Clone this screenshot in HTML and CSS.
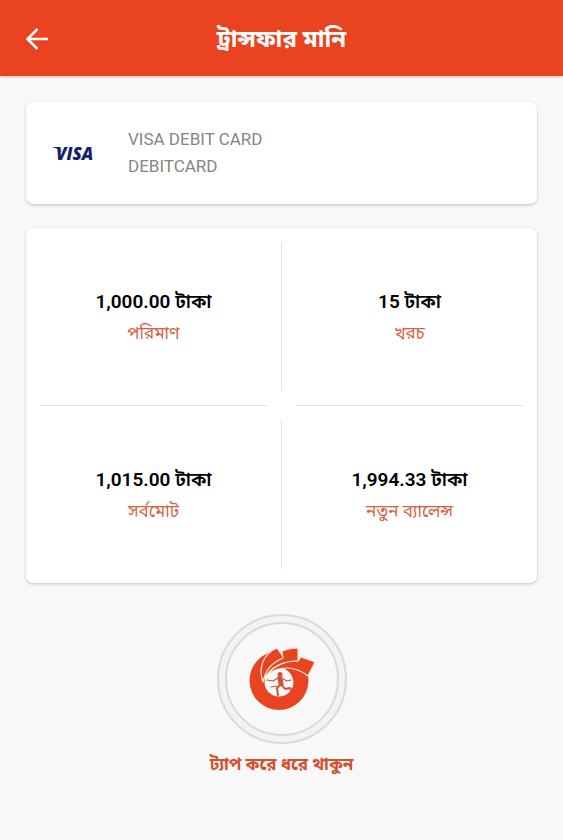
FILE: index.html
```html
<!DOCTYPE html>
<html lang="bn">
<head>
    <meta charset="UTF-8">
    <meta name="viewport" content="width=device-width, initial-scale=1.0">
    <title>ট্রান্সফার মানি</title>
    <link rel="stylesheet" href="styles.css">
</head>
<body>
    <header class="topbar">
        <button class="back" type="button" aria-label="Back">
            <svg width="24" height="24" viewBox="0 0 24 24" fill="none" stroke="#fff" stroke-width="2.5">
                <path d="M24 12H4M13.500 2L3.500 12l10 10"/>
            </svg>
        </button>
        <h1>ট্রান্সফার মানি</h1>
    </header>

    <main>
        <section class="card account">
            <svg class="visa" width="44" height="26" viewBox="0 0 44 26" role="img" aria-label="VISA">
                <path d="M1 7H7l3 5Q7 8.500 1 7.500z" fill="#14206b"/>
                <text x="4" y="20">VISA</text>
            </svg>
            <div class="account-text">
                <div>VISA DEBIT CARD</div>
                <div>DEBITCARD</div>
            </div>
        </section>

        <section class="card summary">
            <div class="cell">
                <div class="value">1,000.00 টাকা</div>
                <div class="label">পরিমাণ</div>
            </div>
            <div class="line-v"></div>
            <div class="cell">
                <div class="value">15 টাকা</div>
                <div class="label">খরচ</div>
            </div>
            <div class="line-h"></div>
            <div></div>
            <div class="line-h"></div>
            <div class="cell">
                <div class="value">1,015.00 টাকা</div>
                <div class="label">সর্বমোট</div>
            </div>
            <div class="line-v"></div>
            <div class="cell">
                <div class="value">1,994.33 টাকা</div>
                <div class="label">নতুন ব্যালেন্স</div>
            </div>
        </section>

        <button class="tap" type="button">
            <span class="ring">
                <span class="ring-inner">
                    <svg width="66" height="66" viewBox="0 0 66 66">
                        <circle cx="30" cy="34.500" r="29.500" fill="#e8441f"/>
                        <path d="M22 0H66V31L58 30Q46 22 31 22L16 28Z" fill="#f8f8f8"/>
                        <circle cx="30" cy="36" r="14.500" fill="#f8f8f8"/>
                        <path d="M34 22Q46 20 55 26L59 34L46 42Q44 25 34 22z" fill="#e8441f"/>
                        <g fill="#e8441f" stroke="#fbe3db" stroke-width="1.200" stroke-linejoin="round">
                            <path d="M14 36C9 22 14 8 28 2l7 10C25 16 17 24 14 36z"/>
                            <path d="M15 33C17 22 25 16 34 12l-1-7Q41 2 49 2v13C35 15 22 20 15 33z"/>
                            <path d="M18 29C26 19 37 15 49 15l3-4 14 5-7 14C47 20 30 19 18 29z"/>
                        </g>
                        <g fill="none" stroke="#cf5430" stroke-linecap="round" stroke-linejoin="round">
                            <circle cx="31" cy="28.500" r="2.500" fill="#cf5430" stroke="none"/>
                            <path d="M31 32l1 6" stroke-width="5"/>
                            <path d="M31 39l-3 3 1 7M33 39l3 4 5-1 1 2" stroke-width="2"/>
                            <path d="M29 32l-5 3-6-1M34 33l4 2 4-1" stroke-width="1.200"/>
                            <path d="M22 41l6-1" stroke-width="1"/>
                        </g>
                    </svg>
                </span>
            </span>
            <span class="tap-label">ট্যাপ করে ধরে থাকুন</span>
        </button>
    </main>
</body>
</html>
```
FILE: styles.css
```css
* {
    box-sizing: border-box;
}
body {
    margin: 0;
    background: #f8f8f8;
    font-family: Roboto, "Noto Sans Bengali", "Noto Sans", sans-serif;
    color: #000;
}
button {
    border: none;
    background: none;
    padding: 0;
    font-family: inherit;
    cursor: pointer;
}
.topbar {
    display: grid;
    grid-template-columns: 26px 1fr 26px;
    align-items: center;
    height: 76px;
    padding: 2px 24px 0;
    background: #e9441f;
    box-shadow: 0 1px 3px rgba(0, 0, 0, 0.2);
}
.back {
    display: flex;
}
.topbar h1 {
    margin: 0;
    font-size: 24px;
    line-height: 32px;
    font-weight: 700;
    text-align: center;
    color: #fff;
}
main {
    padding: 26px;
}
.card {
    background: #fff;
    border-radius: 7px;
    box-shadow: 0 1px 3px rgba(0, 0, 0, 0.24);
}
.account {
    display: flex;
    align-items: center;
    gap: 32px;
    padding: 24px 26px;
    margin-bottom: 24px;
}
.visa text {
    font-family: "Open Sans", "Noto Sans", sans-serif;
    font-size: 17px;
    font-weight: 800;
    font-style: italic;
    fill: #14206b;
}
.account-text {
    font-size: 17px;
    line-height: 27px;
    color: #858585;
}
.summary {
    display: grid;
    grid-template-columns: 1fr 1px 1fr;
    grid-template-rows: 177px 1px 177px;
}
.cell {
    display: flex;
    flex-direction: column;
    justify-content: center;
    text-align: center;
}
.value {
    font-size: 19px;
    line-height: 32px;
    font-weight: 600;
}
.label {
    font-size: 17px;
    line-height: 30px;
    color: #d9603f;
}
.line-v {
    margin: 14px 0;
    background: #e2e2e2;
}
.line-h {
    margin: 0 14px;
    background: #e2e2e2;
}
.tap {
    display: flex;
    flex-direction: column;
    align-items: center;
    margin: 31px auto 0;
}
.ring {
    width: 130px;
    height: 130px;
    padding: 6px;
    border: 2px solid #dadada;
    border-radius: 50%;
    background: #f3f3f3;
}
.ring-inner {
    display: flex;
    align-items: center;
    justify-content: center;
    height: 100%;
    border: 2px solid #dadada;
    border-radius: 50%;
    background: #f8f8f8;
}
.tap-label {
    margin-top: 4px;
    font-size: 17px;
    line-height: 32px;
    font-weight: 700;
    color: #d4502e;
}
```
